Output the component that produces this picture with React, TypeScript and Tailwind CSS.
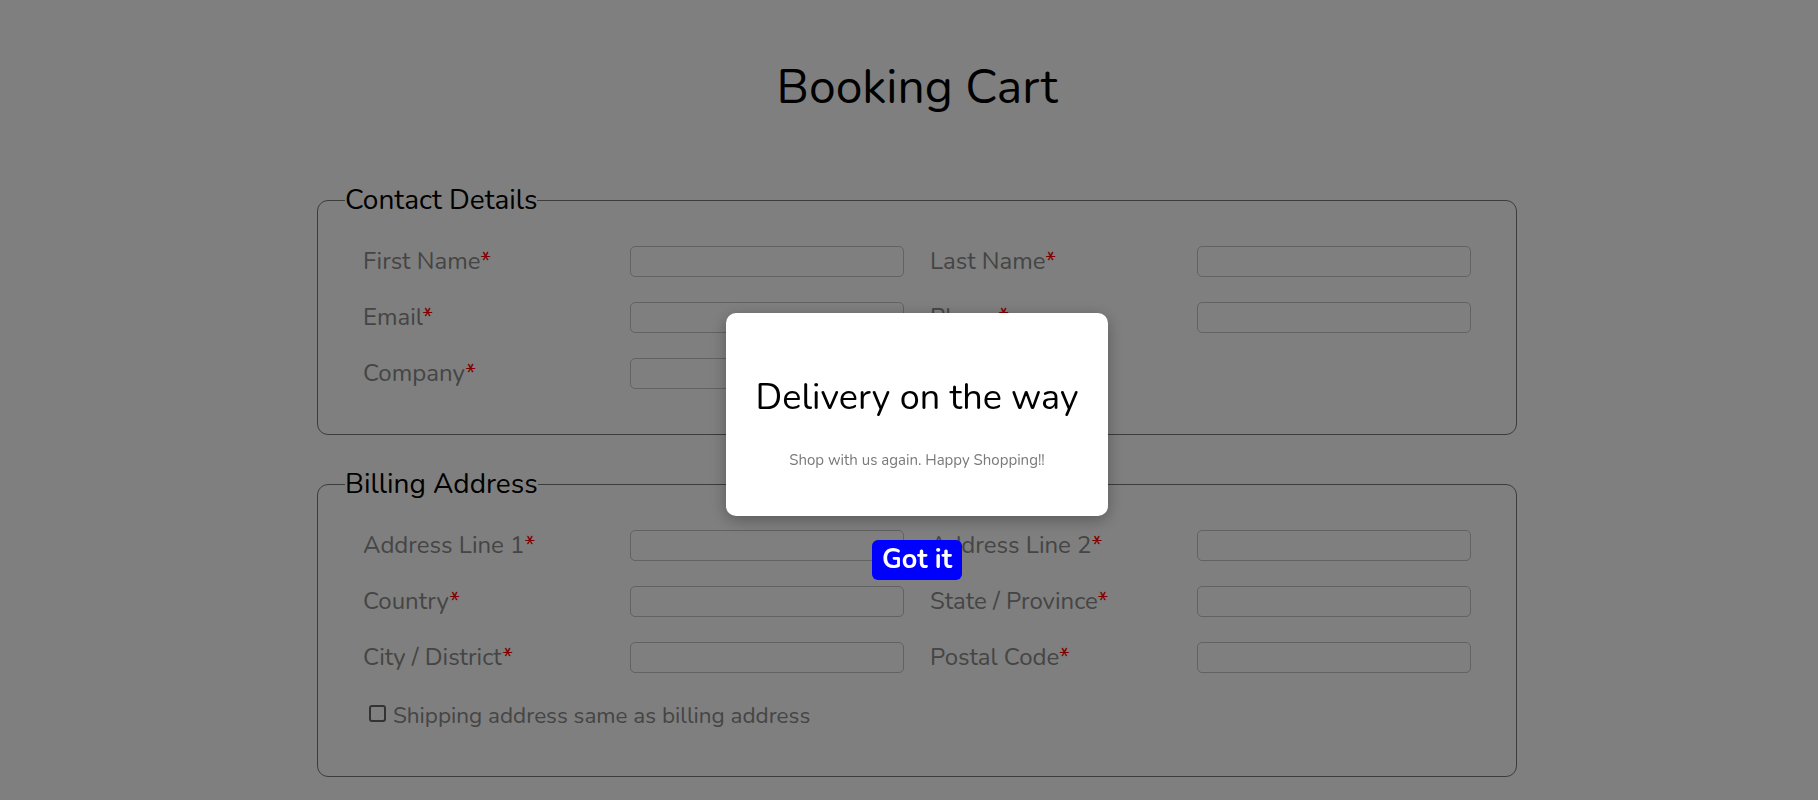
import { useState } from 'react'

type Field = { label: string }

const contactFields: Field[] = [
  { label: 'First Name' },
  { label: 'Last Name' },
  { label: 'Email' },
  { label: 'Phone' },
  { label: 'Company' },
]

const billingFields: Field[] = [
  { label: 'Address Line 1' },
  { label: 'Address Line 2' },
  { label: 'Country' },
  { label: 'State / Province' },
  { label: 'City / District' },
  { label: 'Postal Code' },
]

function FormRow({ label }: Field) {
  return (
    <div className="flex items-center h-[31px]">
      <label className="w-[267px] text-[24px] leading-[31px] text-[#8a8a8a] whitespace-nowrap">
        {label}
        <span className="text-[#ff0000]">*</span>
      </label>
      <input
        type="text"
        className="w-[274px] h-[31px] rounded-[5px] border border-[#c4c4c4] bg-white outline-none"
      />
    </div>
  )
}

function Section({ title, fields, children }: { title: string; fields: Field[]; children?: React.ReactNode }) {
  return (
    <fieldset className="border border-[#787878] rounded-[11px] pb-[45px]">
      <legend className="ml-[27px] text-[28px] leading-[32px] text-black">{title}</legend>
      <div className="px-[45px] pt-[30px]">
        <div className="grid grid-cols-2 gap-x-[26px] gap-y-[25px]">
          {fields.map((f) => (
            <FormRow key={f.label} label={f.label} />
          ))}
        </div>
        {children}
      </div>
    </fieldset>
  )
}

export default function App() {
  const [open, setOpen] = useState(true)
  const [same, setSame] = useState(false)

  return (
    <div className="relative min-h-screen bg-white font-['Nunito','Lato',sans-serif]">
      <div className="pl-4">
        <div className="mx-auto w-[1200px]">
          <h1 className="pt-[63px] text-center text-[48px] leading-[48px] text-black">Booking Cart</h1>

          <div className="mt-[73px]">
            <Section title="Contact Details" fields={contactFields} />
          </div>

          <div className="mt-[33px] pb-10">
            <Section title="Billing Address" fields={billingFields}>
              <label className="mt-[27px] ml-[6px] flex items-center gap-[7px] text-[22.5px] leading-[31px] text-[#8a8a8a]">
                <input
                  type="checkbox"
                  checked={same}
                  onChange={(e) => setSame(e.target.checked)}
                  className="appearance-none -mt-[4px] w-[17px] h-[17px] rounded-[3px] border-2 border-[#666] bg-white"
                />
                Shipping address same as billing address
              </label>
            </Section>
          </div>
        </div>
      </div>

      {open && (
        <div className="fixed inset-0 bg-black/50">
          <div className="pl-4 pt-[313px] flex flex-col items-center">
            <div className="w-[382px] h-[203px] rounded-[10px] bg-white shadow-[0_4px_16px_rgba(0,0,0,0.3)] flex flex-col items-center pt-[67px]">
              <h2 className="text-[36px] leading-[36px] text-black">Delivery on the way</h2>
              <p className="mt-[34px] text-[15px] leading-[20px] text-[#7a7a7a]">
                Shop with us again. Happy Shopping!!
              </p>
            </div>
            <button
              onClick={() => setOpen(false)}
              className="mt-[24px] h-[40px] px-[10px] rounded-[6px] bg-[#0000ff] text-white text-[27px] font-bold leading-[40px]"
            >
              Got it
            </button>
          </div>
        </div>
      )}
    </div>
  )
}
